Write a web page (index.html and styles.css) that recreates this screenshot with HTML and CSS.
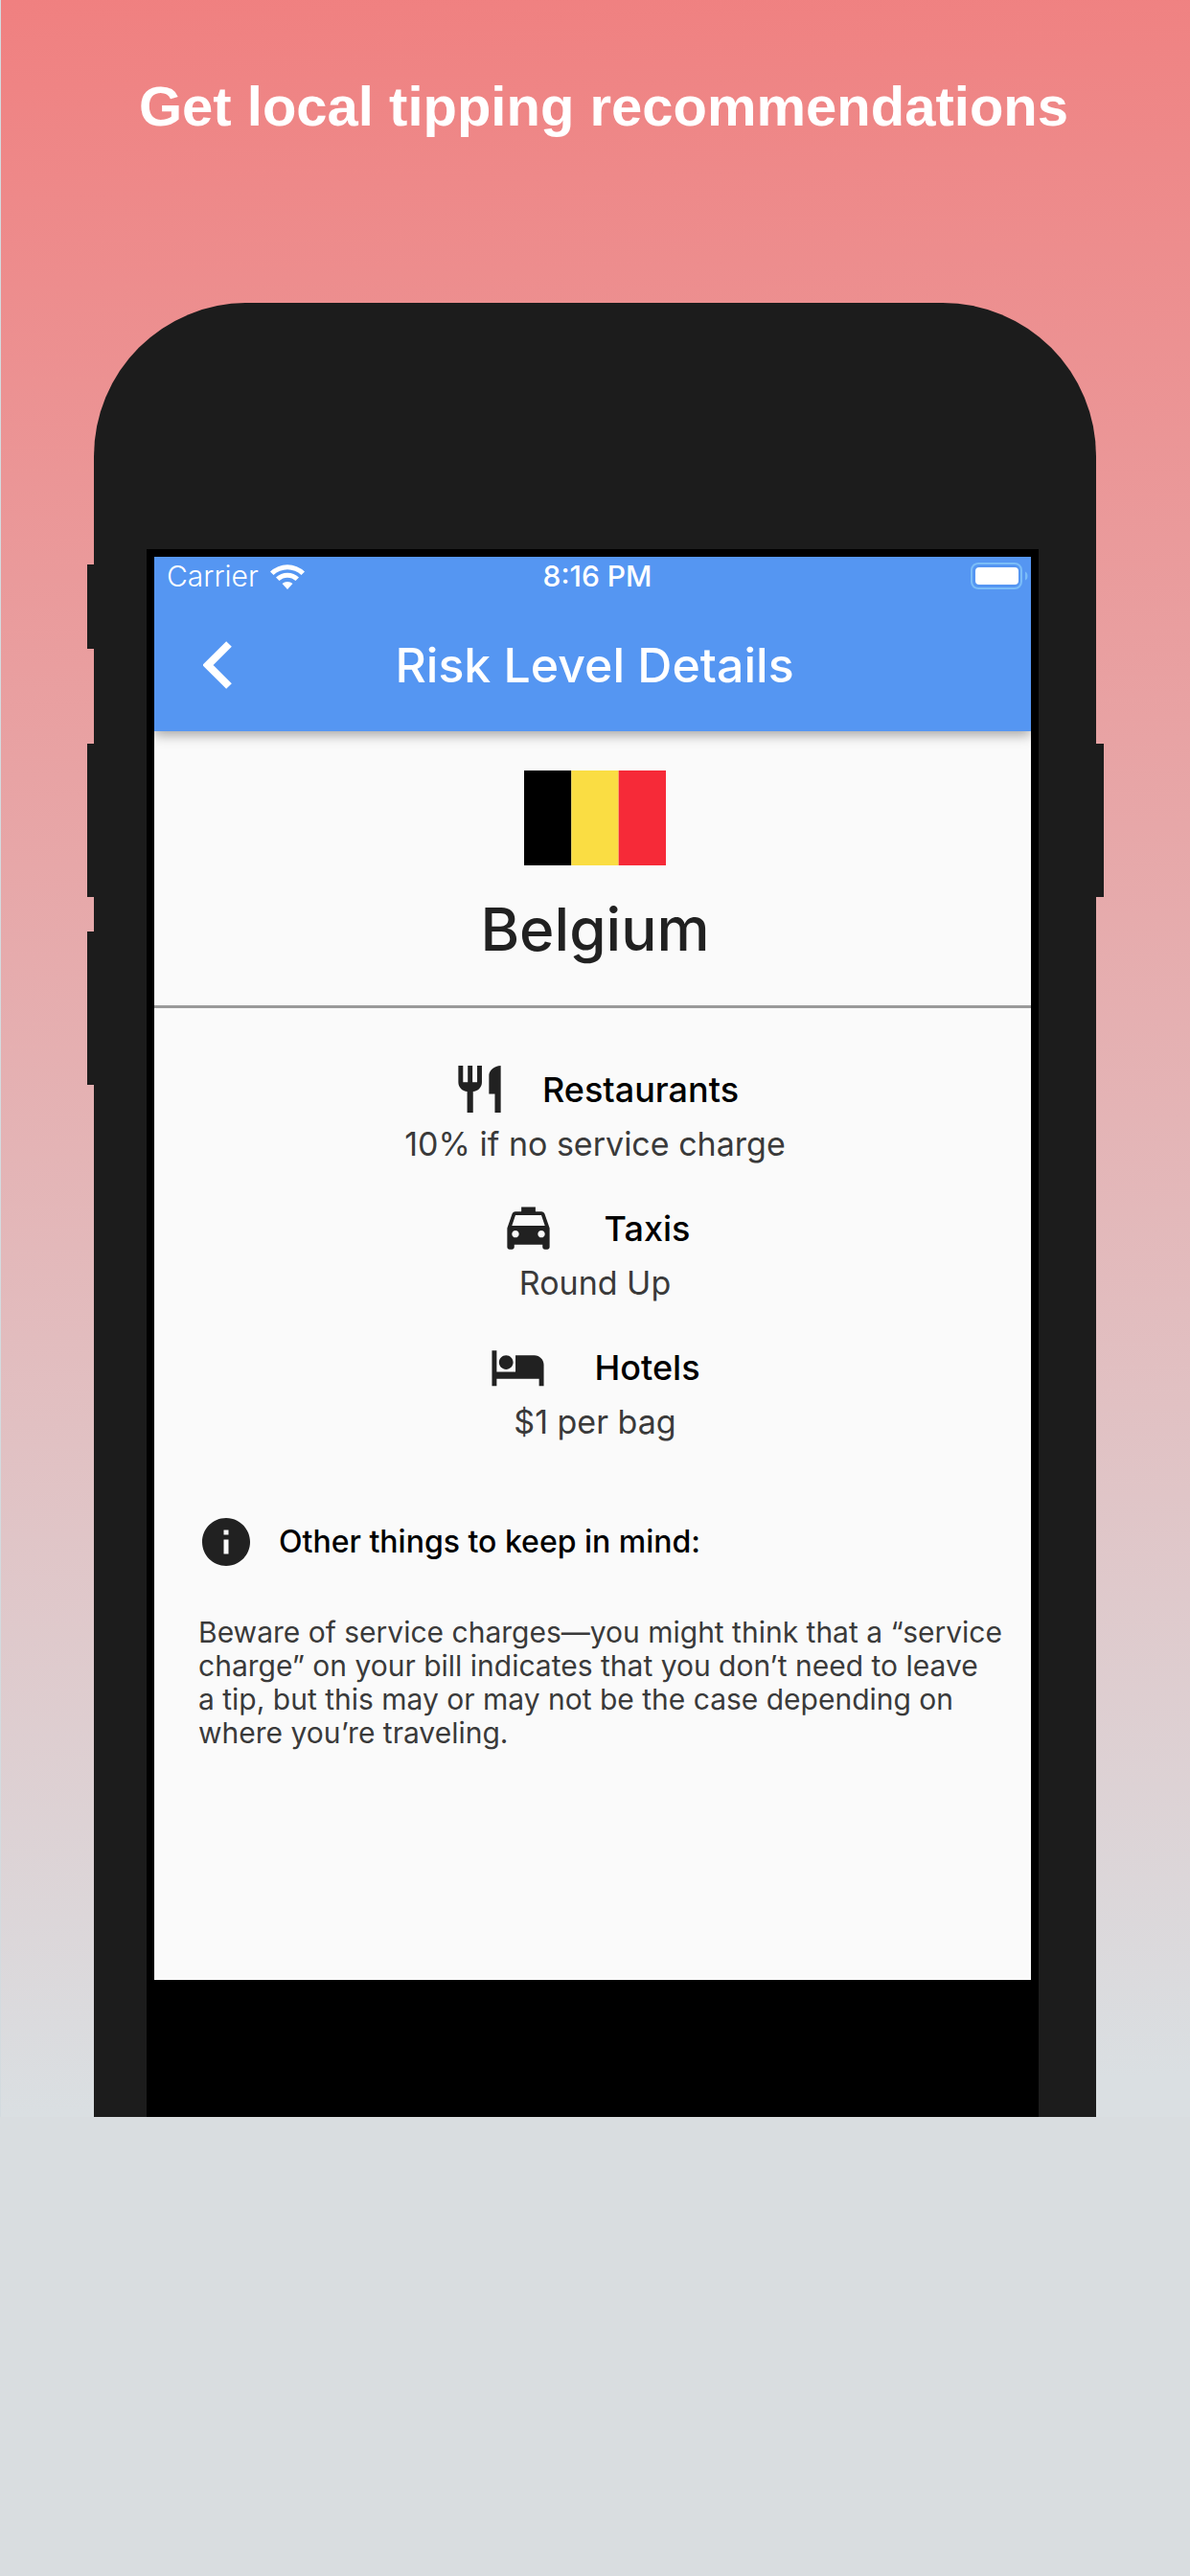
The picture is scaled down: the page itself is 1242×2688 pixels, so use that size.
FILE: index.html
```html
<!DOCTYPE html>
<html lang="en">
<head>
<meta charset="utf-8">
<meta name="viewport" content="width=device-width, initial-scale=1">
<title>Get local tipping recommendations</title>
<link rel="stylesheet" href="styles.css">
</head>
<body>
<div class="promo">
  <h1 class="headline">Get local tipping recommendations</h1>
  <div class="phone">
    <span class="key key-mute"></span>
    <span class="key key-up"></span>
    <span class="key key-down"></span>
    <span class="key key-power"></span>
    <div class="bezel">
      <div class="screen">
        <header class="top">
          <div class="status">
            <span class="carrier">Carrier
              <svg class="wifi" viewBox="0 0 36 27" aria-hidden="true">
                <path d="M0 8.500A26 26 0 0 1 36 8.500L32.500 12A21 21 0 0 0 3.500 12Z"/>
                <path d="M6 14.500A17.500 17.500 0 0 1 30 14.500L26.500 18A12.500 12.500 0 0 0 9.500 18Z"/>
                <path d="M12.500 21A8.500 8.500 0 0 1 23.500 21L18 27Z"/>
              </svg>
            </span>
            <span class="time">8:16 PM</span>
            <svg class="battery" viewBox="0 0 60 28" aria-hidden="true">
              <rect x="1" y="1" width="52" height="26" rx="7" fill="none" stroke="#7bbdf8" stroke-width="2"/>
              <rect x="5" y="5" width="45" height="18" rx="4" fill="#fff"/>
              <path d="M57 9.500q2.500 1 2.500 4.500t-2.500 4.500z" fill="#7bbdf8"/>
            </svg>
          </div>
          <div class="bar">
            <button class="back" type="button" aria-label="Back">
              <svg viewBox="0 0 30 50" aria-hidden="true"><path d="M27 3L5 25L27 47" fill="none" stroke="#fff" stroke-width="8"/></svg>
            </button>
            <h2 class="title">Risk Level Details</h2>
          </div>
        </header>
        <main>
          <section class="country">
            <svg class="flag" viewBox="0 0 3 2" preserveAspectRatio="none" role="img" aria-label="Flag of Belgium">
              <path fill="#000" d="M0 0h1v2H0z"/><path fill="#fadd43" d="M1 0h1v2H1z"/><path fill="#f62a38" d="M2 0h1v2H2z"/>
            </svg>
            <h3 class="name">Belgium</h3>
          </section>
          <section class="tips">
            <article class="tip">
              <div class="tip-head">
                <svg class="icon" viewBox="0 0 24 24" aria-hidden="true"><path d="M11 9H9V2H7v7H5V2H3v7c0 2.120 1.660 3.840 3.750 3.970V22h2.500v-9.030C11.340 12.840 13 11.120 13 9V2h-2v7zm5-3v8h2.500v8H21V2c-2.760 0-5 2.240-5 4z"/></svg>
                <h4 class="label">Restaurants</h4>
              </div>
              <p class="value">10% if no service charge</p>
            </article>
            <article class="tip">
              <div class="tip-head wide">
                <svg class="icon" viewBox="0 0 24 24" aria-hidden="true"><path d="M18.920 6.010C18.720 5.420 18.160 5 17.500 5H15V3H9v2H6.500c-.660 0-1.210.420-1.420 1.010L3 12v8c0 .550.450 1 1 1h1c.550 0 1-.450 1-1v-1h12v1c0 .550.450 1 1 1h1c.550 0 1-.450 1-1v-8l-2.080-5.990zM6.500 16c-.830 0-1.500-.670-1.500-1.500S5.670 13 6.500 13s1.500.670 1.500 1.500S7.330 16 6.500 16zm11 0c-.830 0-1.500-.670-1.500-1.500s.670-1.500 1.500-1.500 1.500.670 1.500 1.500-.670 1.500-1.500 1.500zM5 11l1.500-4.500h11L19 11H5z"/></svg>
                <h4 class="label">Taxis</h4>
              </div>
              <p class="value">Round Up</p>
            </article>
            <article class="tip">
              <div class="tip-head wide">
                <svg class="icon" viewBox="0 0 24 24" aria-hidden="true"><path d="M7 13c1.660 0 3-1.340 3-3S8.660 7 7 7s-3 1.340-3 3 1.340 3 3 3zm12-6h-8v7H3V5H1v15h2v-3h18v3h2v-9c0-2.210-1.790-4-4-4z"/></svg>
                <h4 class="label">Hotels</h4>
              </div>
              <p class="value">$1 per bag</p>
            </article>
          </section>
          <section class="notes">
            <div class="notes-head">
              <svg class="icon info" viewBox="2 2 20 20" preserveAspectRatio="none" aria-hidden="true"><path d="M12 2C6.480 2 2 6.480 2 12s4.480 10 10 10 10-4.480 10-10S17.520 2 12 2zm1 15h-2v-6h2v6zm0-8h-2V7h2v2z"/></svg>
              <h4 class="notes-title">Other things to keep in mind:</h4>
            </div>
            <p class="notes-text">Beware of service charges—you might think that a “service charge” on your bill indicates that you don’t need to leave<br>a tip, but this may or may not be the case depending on<br>where you’re traveling.</p>
          </section>
        </main>
      </div>
    </div>
  </div>
</div>
</body>
</html>
```
FILE: styles.css
```css
* { box-sizing: border-box; }

body {
  margin: 0;
  min-height: 100vh;
  background: #d9dde0;
  font-family: Inter, "Liberation Sans", sans-serif;
  color: #212121;
}

h1, h2, h3, h4, p { margin: 0; }
svg { display: block; flex: none; }

.promo {
  padding: 76px 98px 0 97px;
  border-left: 1px solid #d3dbdf;
  background: linear-gradient(178deg, #f08080 0%, #dadfe2 98%);
}

.headline {
  padding-left: 18px;
  font: bold 58px/70px "Liberation Sans", Arial, sans-serif;
  color: #fff;
  text-align: center;
}

.phone {
  position: relative;
  margin-top: 170px;
  padding: 257px 60px 0 55px;
  border-radius: 160px 160px 0 0;
  background: #1c1c1c;
}

.key {
  position: absolute;
  left: -7px;
  width: 7px;
  height: 160px;
  background: #1c1c1c;
}
.key-mute { top: 273px; height: 88px; }
.key-up { top: 460px; }
.key-down { top: 656px; }
.key-power { top: 460px; left: auto; right: -8px; width: 8px; }

.bezel {
  padding: 8px 8px 143px;
  background: #000;
}

.screen { background: #fafafa; }

.top {
  position: relative;
  background: #5596f2;
  color: #fff;
  box-shadow: 0 4px 12px rgba(0, 0, 0, .35);
  clip-path: inset(0 0 -20px 0);
}

.status {
  display: grid;
  grid-template-columns: 1fr auto 1fr;
  align-items: center;
  height: 40px;
  padding: 0 3px 0 13px;
  font-size: 30px;
  line-height: 40px;
}
.carrier { display: flex; align-items: center; gap: 12px; font-weight: 300; }
.wifi { width: 36px; height: 27px; fill: #fff; }
.time { font-weight: 500; }
.battery { width: 60px; height: 28px; justify-self: end; }

.bar {
  display: grid;
  grid-template-columns: 80px 1fr 80px;
  align-items: center;
  height: 142px;
  padding-top: 3px;
}
.back {
  display: flex;
  padding: 0;
  margin-left: 51px;
  border: 0;
  background: none;
}
.back svg { width: 30px; height: 50px; }
.title { padding-left: 4px; font-size: 50px; line-height: 60px; font-weight: 500; text-align: center; }

main { padding-bottom: 240px; }

.country {
  display: flex;
  flex-direction: column;
  align-items: center;
  gap: 30px;
  padding: 41px 0 42px 5px;
  border-bottom: 3px solid #9a9a9a;
}
.flag { width: 148px; height: 99px; }
.name { font-size: 62px; line-height: 74px; font-weight: 500; }

.tips {
  display: flex;
  flex-direction: column;
  gap: 30px;
  padding: 54px 0 0 5px;
  text-align: center;
}
.tip-head {
  display: flex;
  justify-content: center;
  align-items: center;
  gap: 36px;
  height: 61px;
}
.tip-head.wide { gap: 50px; }
.icon { width: 59px; height: 59px; fill: #212121; }
.label { font-size: 36px; line-height: 60px; font-weight: 500; color: #000; }
.value { font-size: 34px; line-height: 54px; color: #3a3a3a; }

.notes { padding: 73px 24px 0 46px; }
.notes-head { display: flex; align-items: center; gap: 30px; padding-left: 4px; }
.icon.info { width: 50px; height: 50px; }
.notes-title { font-size: 32px; line-height: 50px; font-weight: 500; color: #000; }
.notes-text { margin-top: 52px; font-size: 30px; line-height: 35px; color: #3a3a3a; }
```
